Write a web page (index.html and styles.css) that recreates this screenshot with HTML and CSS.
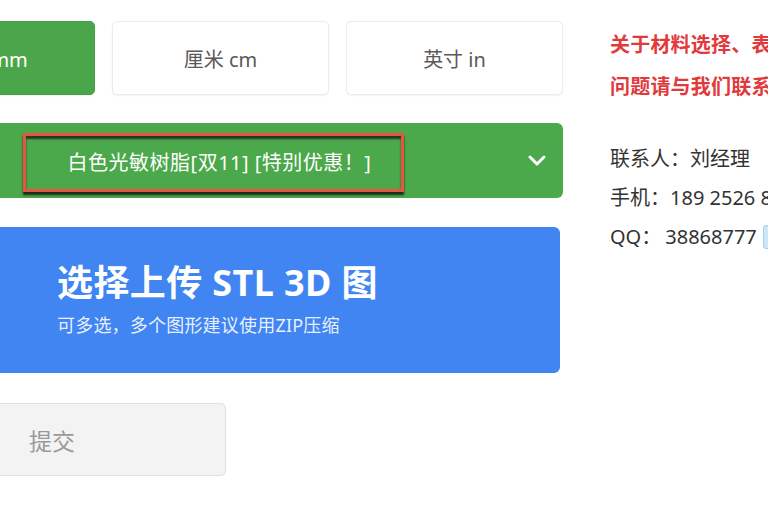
FILE: index.html
```html
<!DOCTYPE html>
<html lang="zh-CN">
<head>
  <meta charset="UTF-8">
  <meta name="viewport" content="width=device-width, initial-scale=1.0">
  <title>上传 STL 3D 图</title>
  <link rel="stylesheet" href="styles.css">
</head>
<body>
  <div class="page">
    <div class="order-form">
      <div class="unit-row">
        <button class="unit active">毫米 mm</button>
        <button class="unit">厘米 cm</button>
        <button class="unit">英寸 in</button>
      </div>
      <div class="material-select">
        <span class="material-name">白色光敏树脂[双11] [特别优惠！]</span>
        <svg class="chevron" width="18" height="11" viewBox="0 0 18 11">
          <path d="M2 2 L9 9 L16 2" fill="none" stroke="#fff" stroke-width="3" stroke-linecap="round" stroke-linejoin="round"/>
        </svg>
      </div>
      <div class="upload-box">
        <div class="upload-title">选择上传 STL 3D 图</div>
        <div class="upload-hint">可多选，多个图形建议使用ZIP压缩</div>
      </div>
      <button class="submit">提交</button>
    </div>
    <div class="side-info">
      <p class="notice">关于材料选择、表面处理等问题<br>问题请与我们联系客服咨询</p>
      <div class="contact">
        <div class="contact-row">联系人：刘经理</div>
        <div class="contact-row">手机：189 2526 8888</div>
        <div class="contact-row">QQ：<span class="qq-num">38868777</span><span class="qq-btn"></span></div>
      </div>
    </div>
  </div>
</body>
</html>
```

FILE: styles.css
```css
body {
  margin: 0;
  background: #fff;
  font-family: 'Noto Sans', 'Noto Sans CJK SC', sans-serif;
  overflow: hidden;
  height: 510px;
}

.page {
  display: flex;
  margin-left: -122px;
  padding-top: 21px;
}

.order-form {
  width: 685px;
  flex: none;
}

.unit-row {
  display: flex;
  gap: 17px;
}

.unit {
  width: 217px;
  height: 74px;
  background: #fff;
  border: 1px solid #ececec;
  border-radius: 5px;
  box-shadow: 0 1px 2px rgba(0, 0, 0, 0.06);
  font-family: inherit;
  font-size: 20px;
  color: #5a5a5a;
  padding: 0;
}

.unit.active {
  background: #4ba64b;
  border-color: #479f47;
  color: #fff;
}

.material-select {
  margin-top: 28px;
  height: 75px;
  background: #4ba84b;
  border-radius: 6px;
  display: flex;
  align-items: center;
  justify-content: center;
  position: relative;
}

.material-name {
  margin-top: 4px;
  margin-right: 14px;
  padding: 12px 30px 12px 42px;
  border: 3px solid #e6563f;
  box-shadow: 0 3px 2px rgba(20, 20, 20, 0.85), inset 0 3px 2px rgba(20, 20, 20, 0.75);
  color: #fff;
  font-size: 20px;
  letter-spacing: 0.5px;
  line-height: 29px;
}

.chevron {
  position: absolute;
  right: 17px;
  top: 32px;
}

.upload-box {
  margin-top: 29px;
  width: 682px;
  height: 146px;
  box-sizing: border-box;
  padding: 33px 0 0 179px;
  background: #4085f2;
  border-radius: 6px;
  color: #fff;
}

.upload-title {
  font-size: 36px;
  font-weight: bold;
  letter-spacing: 0.4px;
  line-height: 46px;
}

.upload-hint {
  margin-top: 6px;
  font-size: 18px;
  letter-spacing: 0.2px;
  line-height: 26px;
  color: rgba(255, 255, 255, 0.9);
}

.submit {
  margin-top: 30px;
  width: 348px;
  height: 73px;
  padding: 0 0 0 150px;
  text-align: left;
  background: #f3f3f3;
  border: 1px solid #e0e0e0;
  border-radius: 5px;
  font-family: inherit;
  font-size: 23px;
  color: #999;
}

.side-info {
  flex: none;
  margin-left: 47px;
  white-space: nowrap;
}

.notice {
  margin: 3px 0 0;
  font-size: 20px;
  letter-spacing: 0.2px;
  line-height: 42px;
  font-weight: bold;
  color: #e23a3c;
}

.contact {
  margin-top: 31px;
  font-size: 20px;
  color: #333;
}

.contact-row {
  height: 39px;
  line-height: 39px;
  display: flex;
  align-items: center;
}

.qq-num {
  margin-left: 4px;
}

.qq-btn {
  display: inline-block;
  width: 22px;
  height: 22px;
  margin-left: 6px;
  background: #cde7f8;
  border: 1px solid #9fd0ef;
  border-radius: 3px;
}
```
